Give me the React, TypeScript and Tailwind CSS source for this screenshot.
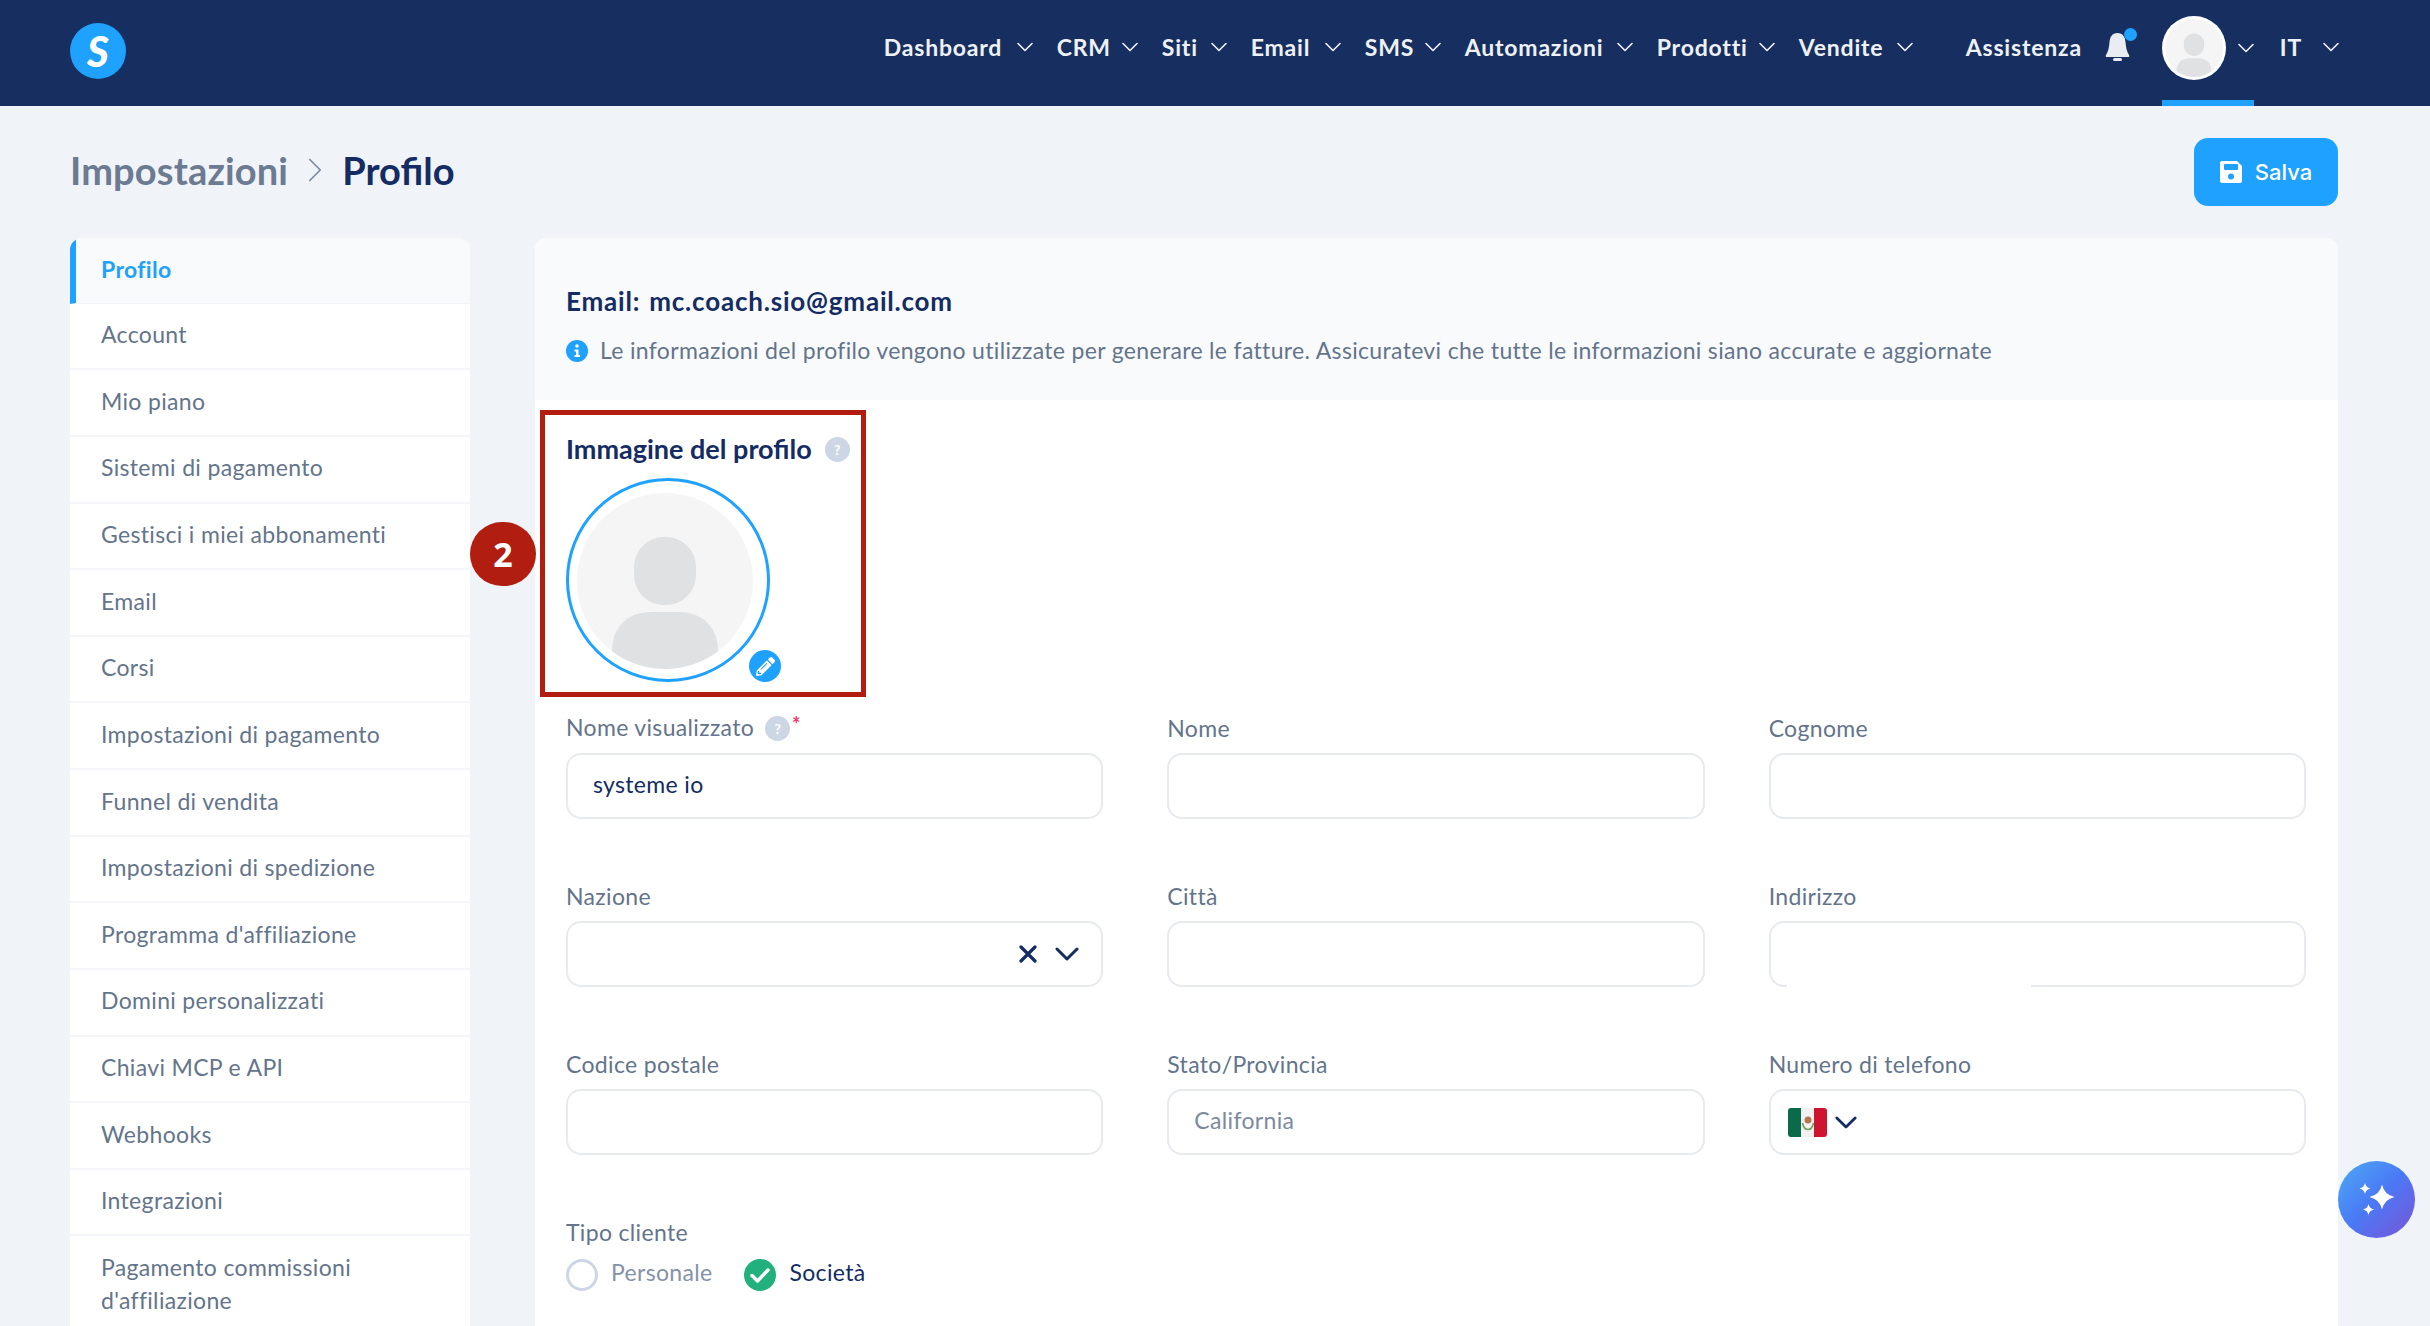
import { ChevronDown, ChevronRight } from 'lucide-react'
import { FaPencilAlt } from 'react-icons/fa'

const navItems = [
  { label: 'Dashboard', width: 'w-[173px]' },
  { label: 'CRM', width: 'w-[105px]' },
  { label: 'Siti', width: 'w-[89px]' },
  { label: 'Email', width: 'w-[114px]' },
  { label: 'SMS', width: 'w-[100px]' },
  { label: 'Automazioni', width: 'w-[192px]' },
  { label: 'Prodotti', width: 'w-[142px]' },
  { label: 'Vendite', width: 'w-[138px]' },
]

const sideItems = [
  'Account',
  'Mio piano',
  'Sistemi di pagamento',
  'Gestisci i miei abbonamenti',
  'Email',
  'Corsi',
  'Impostazioni di pagamento',
  'Funnel di vendita',
  'Impostazioni di spedizione',
  "Programma d'affiliazione",
  'Domini personalizzati',
  'Chiavi MCP e API',
  'Webhooks',
  'Integrazioni',
]

function Star({ x, y, r }: { x: number; y: number; r: number }) {
  const c = r * 0.18
  return (
    <path
      d={`M${x} ${y - r}Q${x + c} ${y - c} ${x + r} ${y}Q${x + c} ${y + c} ${x} ${y + r}Q${x - c} ${y + c} ${x - r} ${y}Q${x - c} ${y - c} ${x} ${y - r}Z`}
      fill="#fff"
    />
  )
}

function Help({ cut }: { cut?: boolean }) {
  return (
    <span
      className={`flex h-[25px] w-[25px] items-center justify-center rounded-full bg-[#cdd6e4] text-[14px] font-bold tracking-normal text-white ${cut ? 'relative top-[1px]' : ''}`}
    >
      ?
    </span>
  )
}

function Avatar({ className }: { className: string }) {
  return (
    <svg viewBox="0 0 176 176" className={className}>
      <defs>
        <clipPath id="avatar-clip">
          <circle cx="88" cy="88" r="88" />
        </clipPath>
      </defs>
      <circle cx="88" cy="88" r="88" fill="#f5f5f5" />
      <g clipPath="url(#avatar-clip)" fill="#e0e1e3">
        <rect x="57" y="44" width="62" height="68" rx="30" />
        <path d="M35 176V158C35 135 50 119 74 119H102C126 119 141 135 141 158V176Z" />
      </g>
    </svg>
  )
}

function Field({ label, children }: { label: string; children?: React.ReactNode }) {
  return (
    <div>
      <div className="h-[33px] text-[23px] leading-[33px] tracking-[0.33px] text-[#64748b]">{label}</div>
      <div className="relative mt-[8px] flex h-[66px] items-center rounded-[15px] border-2 border-[#e7eaee] bg-white px-[25px] pb-[3px] text-[23px] tracking-[0.33px] text-[#142c63]">
        {children}
      </div>
    </div>
  )
}

function Flag() {
  return (
    <svg viewBox="0 0 39 29" className="h-[29px] w-[39px]">
      <rect width="39" height="29" rx="3" fill="#f1f1f1" />
      <path d="M13 0H3a3 3 0 0 0-3 3v23a3 3 0 0 0 3 3h10Z" fill="#0a6a4a" />
      <path d="M26 0h10a3 3 0 0 1 3 3v23a3 3 0 0 1-3 3H26Z" fill="#ce1530" />
      <circle cx="20" cy="12" r="3.5" fill="#b5764f" />
      <path d="M14.5 15c1 5 3 6.5 5.5 6.5s4.500-1.500 5.500-6.500" fill="none" stroke="#6f9d62" strokeWidth="1.600" />
    </svg>
  )
}

export default function App() {
  return (
    <div className="relative h-[1326px] w-full overflow-hidden bg-[#f0f4f9] font-['Lato',sans-serif]">
      <header className="flex h-[106px] items-center bg-[#172f60] pl-[70px] pr-[92px]">
        <div className="-mt-[4px] flex h-[56px] w-[56px] items-center justify-center rounded-full bg-[#1ea1ff] text-[42px] font-black italic leading-none text-white">
          S
        </div>
        <nav className="ml-auto flex h-full items-center text-[23px] font-bold tracking-[0.8px] text-[#eef1f5]">
          {navItems.map((item) => (
            <div key={item.label} className={`mb-[12px] flex items-center ${item.width}`}>
              <span>{item.label}</span>
              <ChevronDown className="ml-auto mr-[18px] h-[28px] w-[28px]" strokeWidth={1.4} />
            </div>
          ))}
          <span className="mb-[12px] ml-[29px] w-[139px]">Assistenza</span>
          <div className="relative mb-[12px] mr-[32px] h-[30px] w-[25px]">
            <svg viewBox="0 0 25 29" className="h-[29px] w-[25px]" fill="#e9ecf0">
              <path d="M12.500 1C7 1 5 5 4.500 10C4 16 3 20 1 23Q0 25 2 25H23Q25 25 24 23C22 20 21 16 20.500 10C20 5 18 1 12.500 1Z" />
              <rect x="8" y="26" width="9" height="3" rx="1.500" />
            </svg>
            <span className="absolute -top-[4px] left-[19px] h-[13px] w-[13px] rounded-full bg-[#1ea1ff]" />
          </div>
          <div className="relative flex h-full w-[92px] items-center self-stretch border-b-[6px] border-[#1ea1ff] pb-[4px]">
            <div className="flex h-[64px] w-[64px] items-center justify-center rounded-full bg-white">
              <Avatar className="h-[58px] w-[58px]" />
            </div>
            <ChevronDown className="-mr-[6px] ml-auto h-[28px] w-[28px]" strokeWidth={1.4} />
          </div>
          <span className="mb-[12px] ml-[26px]">IT</span>
          <ChevronDown className="-mr-[7px] mb-[12px] ml-[15px] h-[28px] w-[28px]" strokeWidth={1.4} />
        </nav>
      </header>

      <div className="pl-[70px] pr-[92px]">
        <div className="flex h-[132px] items-center justify-between">
          <div className="flex items-center pb-[4px] text-[38px] font-bold">
            <span className="tracking-[0.15px] text-[#6c7a92]">Impostazioni</span>
            <ChevronRight className="mx-[6px] h-[42px] w-[42px] text-[#7d8aa0]" strokeWidth={1} />
            <span className="text-[#142c63]">Profilo</span>
          </div>
          <button className="flex h-[68px] w-[144px] items-center justify-center gap-[13px] rounded-[14px] bg-[#1ea1ff] font-['Inter',sans-serif] text-[22px] font-medium text-white">
            <svg viewBox="0 0 22 22" className="h-[22px] w-[22px]">
              <path d="M2 0H17L22 5V20a2 2 0 0 1-2 2H2a2 2 0 0 1-2-2V2a2 2 0 0 1 2-2Z" fill="#fff" />
              <rect x="4" y="3" width="14" height="6" rx="1" fill="#1ea1ff" />
              <circle cx="11" cy="15.500" r="3" fill="#1ea1ff" />
            </svg>
            Salva
          </button>
        </div>

        <div className="flex gap-[65px]">
          <aside className="w-[400px] shrink-0 overflow-hidden rounded-t-[12px] bg-white text-[23px] tracking-[0.33px] text-[#64748b]">
            <div className="flex h-[65.640px] items-center border-b border-[#f1f4f7] border-l-[6px] border-l-[#1ea1ff] bg-[#f8fafc] pb-[3px] pl-[25px] font-bold text-[#1ea1ff]">
              Profilo
            </div>
            {sideItems.map((item) => (
              <div key={item} className="flex h-[66.640px] items-center border-b-2 border-[#f4f6f9] pb-[3px] pl-[31px]">
                {item}
              </div>
            ))}
            <div className="pb-[15px] pl-[31px] pr-[40px] pt-[15px] leading-[33px]">Pagamento commissioni d'affiliazione</div>
          </aside>

          <main className="min-w-0 flex-1 rounded-t-[12px] bg-white">
            <div className="h-[162px] rounded-t-[12px] bg-[#f8fafc] px-[31px] pt-[45px]">
              <div className="text-[26px] font-bold leading-[36px] tracking-[0.8px] text-[#142c63]">
                <span className="mr-[9px]">Email:</span>mc.coach.sio@gmail.com
              </div>
              <div className="mt-[15px] flex items-center text-[23px] leading-[33px] tracking-[0.33px] text-[#64748b]">
                <svg viewBox="0 0 22 22" className="mr-[12px] h-[22px] w-[22px]">
                  <circle cx="11" cy="11" r="11" fill="#1ea1ff" />
                  <circle cx="11" cy="6" r="1.800" fill="#fff" />
                  <path d="M8.500 9.500H12.500V15H14V17H8.500V15H10V11.500H8.500Z" fill="#fff" />
                </svg>
                Le informazioni del profilo vengono utilizzate per generare le fatture. Assicuratevi che tutte le informazioni siano accurate e aggiornate
              </div>
            </div>

            <div className="px-[31px]">
              <div className="relative -ml-[26px] mt-[10px] h-[287px] w-[326px] border-[5px] border-[#b11e10] pl-[21px]">
                <div className="flex h-[63px] items-center pt-[6px] text-[27px] font-bold text-[#142c63]">
                  Immagine del profilo
                  <span className="ml-[13px]">
                    <Help />
                  </span>
                </div>
                <div className="relative h-[204px] w-[204px] rounded-full border-[3px] border-[#1ea1ff]">
                  <Avatar className="absolute left-[8px] top-[12px] h-[176px] w-[176px]" />
                  <span className="absolute -bottom-[3px] -right-[14px] flex h-[32px] w-[32px] items-center justify-center rounded-full bg-[#1ea1ff] text-[19px] text-white">
                    <FaPencilAlt />
                  </span>
                </div>
                <div className="absolute -left-[75px] top-[107px] flex h-[64px] w-[66px] items-center justify-center rounded-full bg-[#b11e10] font-['Open_Sans',sans-serif] text-[34px] font-bold text-white">
                  2
                </div>
              </div>

              <div className="mt-[15px] grid grid-cols-3 gap-x-[64px] gap-y-[61px] pr-[1px]">
                <div>
                  <div className="flex h-[33px] items-center pb-[2px] text-[23px] tracking-[0.33px] text-[#64748b]">
                    Nome visualizzato
                    <span className="ml-[11px]">
                      <Help cut />
                    </span>
                    <span className="relative -top-[4px] ml-[2px] text-[20px] font-bold text-[#f0386b]">*</span>
                  </div>
                  <div className="mt-[8px] flex h-[66px] items-center rounded-[15px] border-2 border-[#e7eaee] bg-white px-[25px] pb-[3px] text-[23px] tracking-[0.33px] text-[#142c63]">
                    systeme io
                  </div>
                </div>
                <Field label="Nome" />
                <Field label="Cognome" />
                <Field label="Nazione">
                  <div className="-mr-[3px] ml-auto flex items-center gap-[18px] pt-[3px]">
                    <svg viewBox="0 0 18 18" className="h-[18px] w-[18px]" stroke="#142c63" strokeWidth="3.200" strokeLinecap="round">
                      <path d="M2 2L16 16M16 2L2 16" />
                    </svg>
                    <svg viewBox="0 0 24 14" className="h-[14px] w-[24px]" fill="none" stroke="#142c63" strokeWidth="3" strokeLinecap="round" strokeLinejoin="round">
                      <path d="M2 2L12 12L22 2" />
                    </svg>
                  </div>
                </Field>
                <Field label="Città" />
                <Field label="Indirizzo">
                  <span className="absolute -bottom-[2px] left-[16px] h-[2px] w-[244px] bg-white" />
                </Field>
                <Field label="Codice postale" />
                <Field label="Stato/Provincia">
                  <span className="text-[#7c8aa0]">California</span>
                </Field>
                <Field label="Numero di telefono">
                  <div className="-ml-[8px] flex items-center gap-[8px] pt-[3px]">
                    <Flag />
                    <svg viewBox="0 0 24 14" className="h-[13px] w-[22px]" fill="none" stroke="#142c63" strokeWidth="3" strokeLinecap="round" strokeLinejoin="round">
                      <path d="M2 2L12 12L22 2" />
                    </svg>
                  </div>
                </Field>
              </div>

              <div className="mt-[61px]">
                <div className="h-[33px] text-[23px] leading-[33px] tracking-[0.33px] text-[#64748b]">Tipo cliente</div>
                <div className="mt-[9px] flex items-center text-[23px] tracking-[0.33px]">
                  <span className="h-[32px] w-[32px] rounded-full border-[3px] border-[#cdd6e4]" />
                  <span className="ml-[13px] -translate-y-[3px] text-[#8492a8]">Personale</span>
                  <svg viewBox="0 0 32 32" className="ml-[32px] h-[32px] w-[32px]">
                    <circle cx="16" cy="16" r="16" fill="#22b07d" />
                    <path d="M8 16.500L13.500 22L24 11" fill="none" stroke="#fff" strokeWidth="3.500" strokeLinecap="round" strokeLinejoin="round" />
                  </svg>
                  <span className="ml-[13px] -translate-y-[3px] text-[#142c63]">Società</span>
                </div>
              </div>
            </div>
          </main>
        </div>
      </div>

      <button className="absolute left-[2338px] top-[1161px] h-[77px] w-[77px] rounded-full bg-gradient-to-br from-[#4fa9f5] via-[#4a78f5] to-[#7353d6]">
        <svg viewBox="0 0 77 77" className="h-[77px] w-[77px]">
          <Star x={44} y={36} r={12.500} />
          <Star x={27} y={27.500} r={5.500} />
          <Star x={30.500} y={48.500} r={5.500} />
        </svg>
      </button>
    </div>
  )
}
